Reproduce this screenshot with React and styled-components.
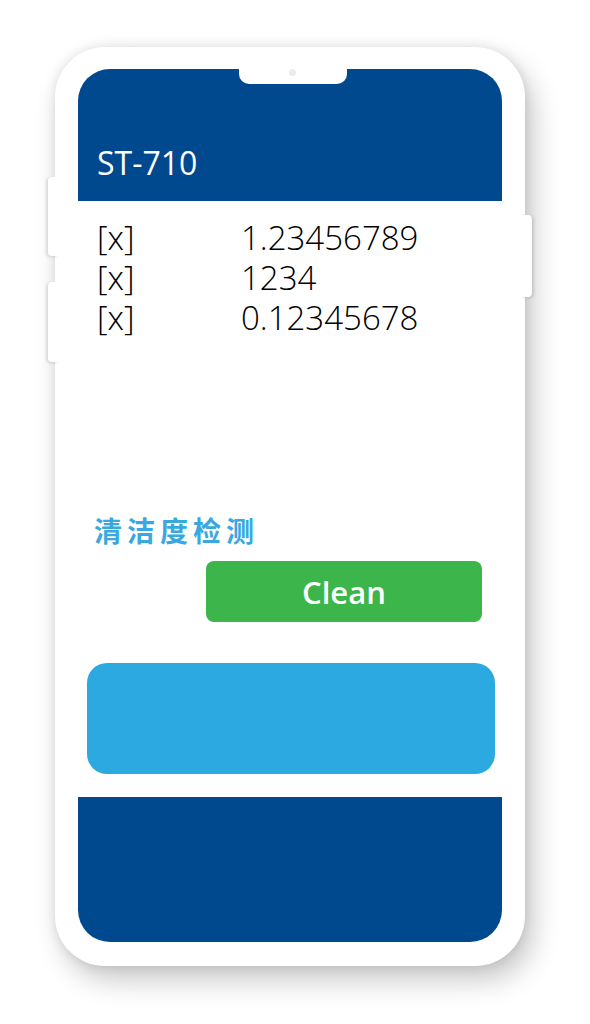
import styled, { createGlobalStyle } from "styled-components"

const GlobalStyle = createGlobalStyle`
  html, body {
    margin: 0;
    padding: 0;
    background: #ffffff;
  }
  body {
    font-family: "Open Sans", "Noto Sans", "Noto Sans CJK SC", sans-serif;
  }
`

const rows = [
  { label: '[x]', value: '1.23456789' },
  { label: '[x]', value: '1234' },
  { label: '[x]', value: '0.12345678' },
]

const App = () => {
  return <Page>
    <GlobalStyle />
    <Phone>
      <SideKey $side="left" $top={130} $height={79} />
      <SideKey $side="left" $top={235} $height={80} />
      <SideKey $side="right" $top={168} $height={82} />
      <Screen>
        <Notch><Camera /></Notch>
        <Header>
          <Title>ST-710</Title>
        </Header>
        <Readings>
          {
            rows.map((row, i) => (
              <Reading key={i}>
                <span>{row.label}</span>
                <span>{row.value}</span>
              </Reading>
            ))
          }
        </Readings>
        <Section>
          <Heading>清洁度检测</Heading>
          <StatusButton>Clean</StatusButton>
        </Section>
        <Panel />
        <Footer />
      </Screen>
    </Phone>
  </Page>
}

const Page = styled.div`
  width: 590px;
  height: 1024px;
  padding: 47px 0 0 55px;
  box-sizing: border-box;
  overflow: hidden;
`

const Phone = styled.div`
  position: relative;
  isolation: isolate;
  width: 470px;
  height: 919px;
  box-sizing: border-box;
  padding: 22px 23px 24px 23px;
  background: #ffffff;
  border-radius: 50px;
  box-shadow: 8px 14px 28px rgba(0, 0, 0, 0.22), 0 0 12px rgba(0, 0, 0, 0.1);
`

const SideKey = styled.div`
  position: absolute;
  top: ${props => props.$top}px;
  ${props => props.$side === 'left' ? 'left: -7px;' : 'right: -7px;'}
  width: 12px;
  height: ${props => props.$height}px;
  background: #ffffff;
  border-radius: 4px;
  box-shadow: ${props => props.$side === 'left' ? '-2px 1px 3px' : '2px 1px 3px'} rgba(0, 0, 0, 0.12);
  z-index: -1;
`

const Screen = styled.div`
  position: relative;
  height: 100%;
  display: flex;
  flex-direction: column;
  border-radius: 32px;
  overflow: hidden;
  background: #ffffff;
`

const Notch = styled.div`
  position: absolute;
  top: 0;
  left: 161px;
  width: 108px;
  height: 15px;
  background: #ffffff;
  border-radius: 0 0 10px 10px;
`

const Camera = styled.div`
  position: absolute;
  top: 0px;
  left: 50px;
  width: 7px;
  height: 7px;
  border-radius: 50%;
  background: #ececec;
`

const Header = styled.div`
  height: 132px;
  flex-shrink: 0;
  background: #00498f;
  display: flex;
  align-items: flex-end;
  padding: 0 0 18px 19px;
  box-sizing: border-box;
`

const Title = styled.h1`
  margin: 0;
  color: #ffffff;
  font-size: 32px;
  font-weight: 400;
  line-height: 40px;
`

const Readings = styled.div`
  padding: 17px 0 0 19px;
`

const Reading = styled.div`
  display: grid;
  grid-template-columns: 144px auto;
  font-size: 33px;
  font-weight: 300;
  line-height: 40px;
  color: #000000;
`

const Section = styled.div`
  margin-top: 174px;
  padding-left: 16px;
  display: flex;
  flex-direction: column;
`

const Heading = styled.div`
  font-family: "Noto Sans CJK SC", sans-serif;
  font-size: 28px;
  font-weight: 700;
  letter-spacing: 5px;
  line-height: 36px;
  color: #3aa8e0;
`

const StatusButton = styled.div`
  margin: 13px 0 0 112px;
  width: 276px;
  height: 61px;
  border-radius: 8px;
  background: #3cb54a;
  color: #ffffff;
  font-size: 31px;
  font-weight: 600;
  display: flex;
  align-items: center;
  justify-content: center;
`

const Panel = styled.div`
  margin: 41px 7px 0 9px;
  height: 111px;
  border-radius: 20px;
  background: #2ba9e0;
`

const Footer = styled.div`
  margin-top: auto;
  height: 145px;
  background: #00498f;
`

export default App
